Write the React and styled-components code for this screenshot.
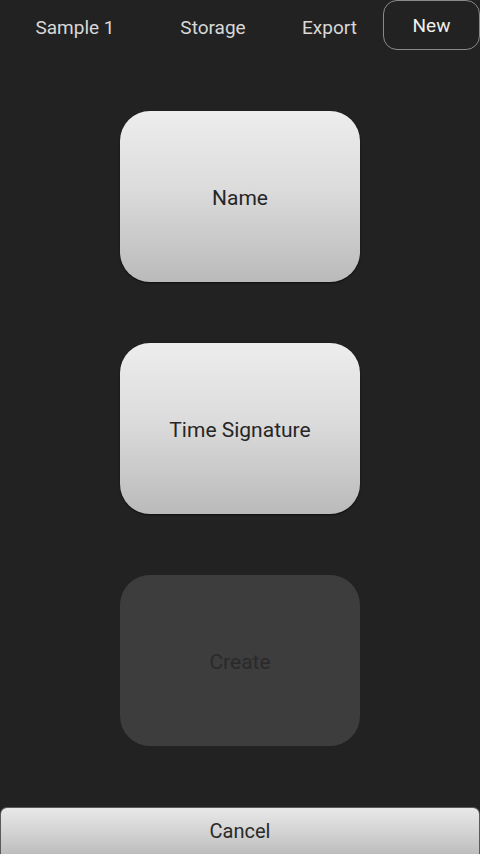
import React from 'react';
import styled, { createGlobalStyle } from 'styled-components';

const GlobalStyle = createGlobalStyle`
  html, body {
    margin: 0;
    padding: 0;
    background: #222222;
  }
  body {
    font-family: Roboto, 'Noto Sans', sans-serif;
  }
`;

const Screen = styled.div`
  width: 480px;
  height: 854px;
  background: #222222;
  display: flex;
  flex-direction: column;
  overflow: hidden;
`;

const TabBar = styled.div`
  display: flex;
  height: 50px;
  flex-shrink: 0;
`;

const Tab = styled.div`
  width: ${props => props.width}px;
  box-sizing: border-box;
  display: flex;
  align-items: center;
  justify-content: center;
  font-size: 19px;
  padding-top: ${props => (props.active ? '0' : '4px')};
  border: ${props => (props.active ? '1.5px solid #8a8a8a' : 'none')};
  border-radius: 14px;
  color: ${props => (props.active ? '#f0f0f0' : '#d8d8d8')};
`;

const Content = styled.div`
  flex: 1;
  display: flex;
  flex-direction: column;
  align-items: center;
  padding-top: 61px;
  gap: 61px;
`;

const BigButton = styled.button`
  width: 240px;
  height: 171px;
  border: none;
  border-radius: 30px;
  font-family: Roboto, 'Noto Sans', sans-serif;
  font-size: 21px;
  background: ${props =>
    props.disabled
      ? '#3d3d3d'
      : 'linear-gradient(to bottom, #ededed 0%, #dcdcdc 45%, #bababa 100%)'};
  color: ${props => (props.disabled ? '#2a2a2a' : '#262626')};
  box-shadow: ${props => (props.disabled ? 'none' : '0 1px 2px rgba(0,0,0,0.6)')};
  cursor: pointer;
  padding: 3px 0 0;
`;

const CancelButton = styled.button`
  height: 47px;
  width: 480px;
  flex-shrink: 0;
  border: 1px solid #5a5a5a;
  border-bottom: none;
  border-radius: 7px 7px 0 0;
  background: linear-gradient(to bottom, #e8e8e8 0%, #d4d4d4 50%, #bdbdbd 100%);
  font-family: Roboto, 'Noto Sans', sans-serif;
  font-size: 20px;
  color: #2a2a2a;
  padding: 0;
`;

const tabs = [
  { label: 'Sample 1', width: 150 },
  { label: 'Storage', width: 126 },
  { label: 'Export', width: 107 },
  { label: 'New', width: 97, active: true },
];

export default function App() {
  return (
    <Screen>
      <GlobalStyle />
      <TabBar>
        {tabs.map(t => (
          <Tab key={t.label} width={t.width} active={t.active}>
            {t.label}
          </Tab>
        ))}
      </TabBar>
      <Content>
        <BigButton>Name</BigButton>
        <BigButton>Time Signature</BigButton>
        <BigButton disabled>Create</BigButton>
      </Content>
      <CancelButton>Cancel</CancelButton>
    </Screen>
  );
}
